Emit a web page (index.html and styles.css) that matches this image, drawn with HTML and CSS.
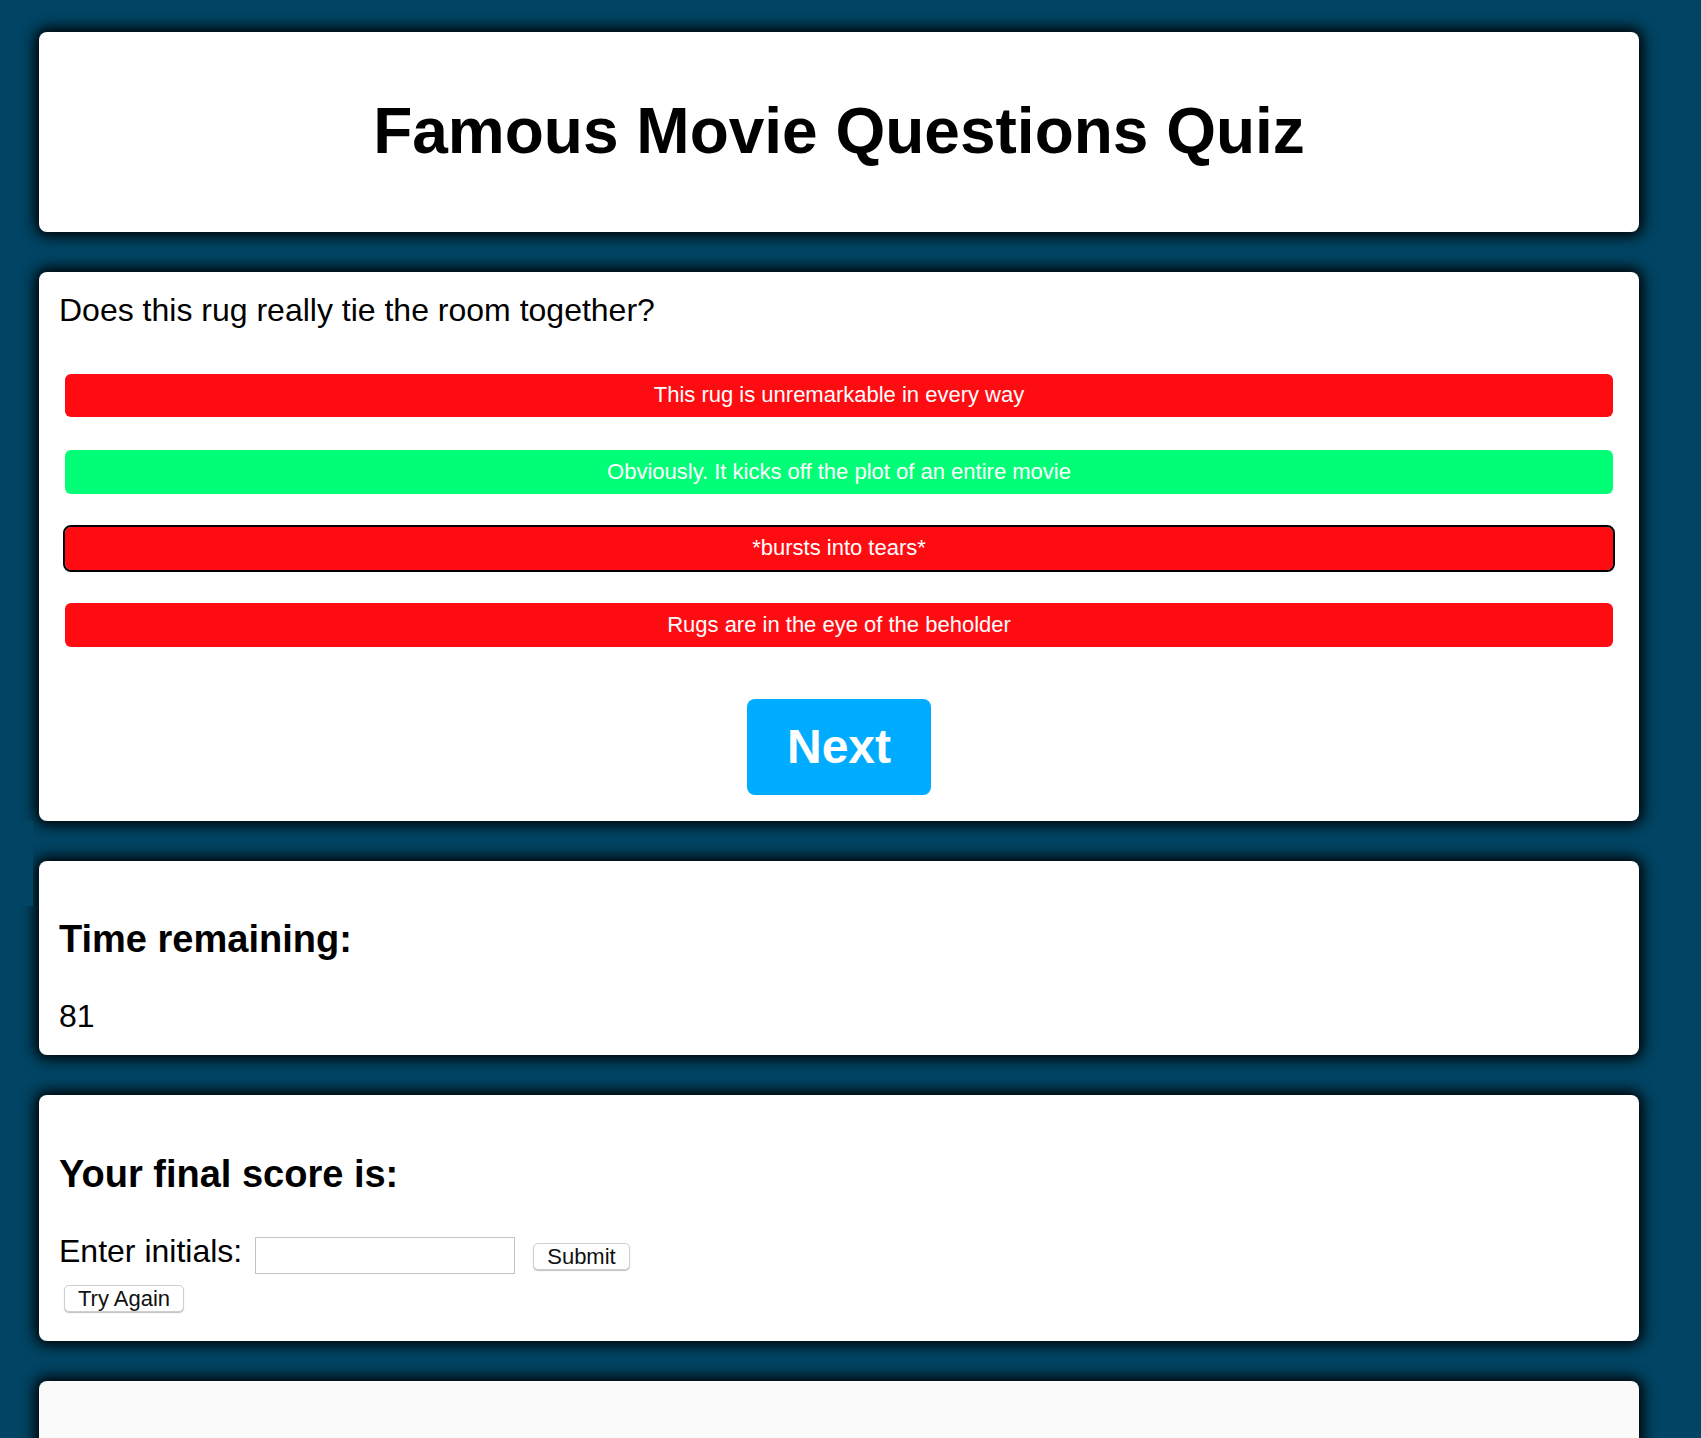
FILE: index.html
```html
<!DOCTYPE html>
<html lang="en">
<head>
<meta charset="utf-8">
<title>Famous Movie Questions Quiz</title>
<link rel="stylesheet" href="styles.css">
</head>
<body>
<div class="page">
  <header class="card header-card">
    <h1 class="title">Famous Movie Questions Quiz</h1>
  </header>

  <section class="card question-card">
    <div class="question">Does this rug really tie the room together?</div>
    <div class="answers">
      <button class="answer wrong">This rug is unremarkable in every way</button>
      <button class="answer right">Obviously. It kicks off the plot of an entire movie</button>
      <button class="answer wrong focused">*bursts into tears*</button>
      <button class="answer wrong">Rugs are in the eye of the beholder</button>
    </div>
    <div class="next-row">
      <button class="next-btn">Next</button>
    </div>
  </section>

  <section class="card timer-card">
    <h3 class="card-heading">Time remaining:</h3>
    <div class="timer-value">81</div>
  </section>

  <section class="card score-card">
    <h3 class="card-heading">Your final score is:</h3>
    <div class="initials-row">
      <label class="initials-label" for="initials">Enter initials:</label>
      <input id="initials" class="initials-input" type="text">
      <button class="small-btn submit-btn">Submit</button>
    </div>
    <button class="small-btn again-btn">Try Again</button>
  </section>

  <section class="card scores-card"></section>
</div>
<div class="edge-patch"></div>
</body>
</html>
```

FILE: styles.css
```css
html, body {
  margin: 0;
  padding: 0;
  background: #014463;
}

body {
  font-family: "Liberation Sans", Arial, Helvetica, sans-serif;
  font-size: 32px;
  color: #000;
  height: 1438px;
  overflow: hidden;
  position: relative;
}

.page {
  padding: 32px 0 0 39px;
  display: flex;
  flex-direction: column;
  gap: 40px;
}

.card {
  width: 1600px;
  box-sizing: border-box;
  background: #fff;
  border-radius: 8px;
  padding: 20px;
  box-shadow: 0 0 14px 4px #000;
}

.title {
  font-size: 64px;
  font-weight: bold;
  text-align: center;
  margin: 43px 0;
  line-height: 73.5px;
}

.question {
  font-size: 32px;
  line-height: 37px;
}

.answers {
  margin: 45px 6px 0;
  display: flex;
  flex-direction: column;
  gap: 33px;
}

.answer {
  display: block;
  width: 100%;
  border: none;
  border-radius: 6px;
  padding: 9.5px 10px;
  font-family: "Liberation Sans", Arial, Helvetica, sans-serif;
  font-size: 22px;
  line-height: 24.5px;
  color: #fff;
  text-align: center;
}

.wrong { background: #ff0c12; }
.right { background: #00ff77; }

.focused {
  outline: 2px solid #000;
  outline-offset: 0;
}

.next-row {
  display: flex;
  justify-content: center;
  margin: 52px 0 6px;
}

.next-btn {
  background: #00acff;
  color: #fff;
  border: none;
  border-radius: 8px;
  font-family: "Liberation Sans", Arial, Helvetica, sans-serif;
  font-weight: bold;
  font-size: 48px;
  line-height: 56px;
  padding: 20px 40px;
  width: 184px;
}

.card-heading {
  font-size: 38px;
  font-weight: bold;
  line-height: 43px;
  margin: 37.44px 0;
}

.timer-value {
  line-height: 37px;
}

.initials-row {
  line-height: 37px;
}

.initials-input {
  width: 260px;
  height: 37px;
  box-sizing: border-box;
  border: 1px solid #c2c2c2;
  border-radius: 0;
  padding: 6px 8px;
  font-family: "Liberation Sans", Arial, Helvetica, sans-serif;
  font-size: 20px;
  margin: 0 5px 0 4px;
  vertical-align: baseline;
}

.small-btn {
  font-family: "Liberation Sans", Arial, Helvetica, sans-serif;
  font-size: 22px;
  line-height: 25px;
  color: #111;
  background: #fff;
  border: 1px solid #cfcfcf;
  border-radius: 5px;
  box-shadow: 0 1px 1px rgba(0, 0, 0, 0.25);
  padding: 0 10px;
}

.submit-btn {
  width: 97px;
  margin-left: 4px;
  vertical-align: -2px;
}

.again-btn {
  display: block;
  width: 120px;
  margin: 11px 0 9px 5px;
}

.scores-card {
  background: #fafafa;
  height: 200px;
}

.edge-patch {
  position: absolute;
  left: 0;
  top: 821px;
  width: 33px;
  height: 85px;
  background: #014463;
}
```
